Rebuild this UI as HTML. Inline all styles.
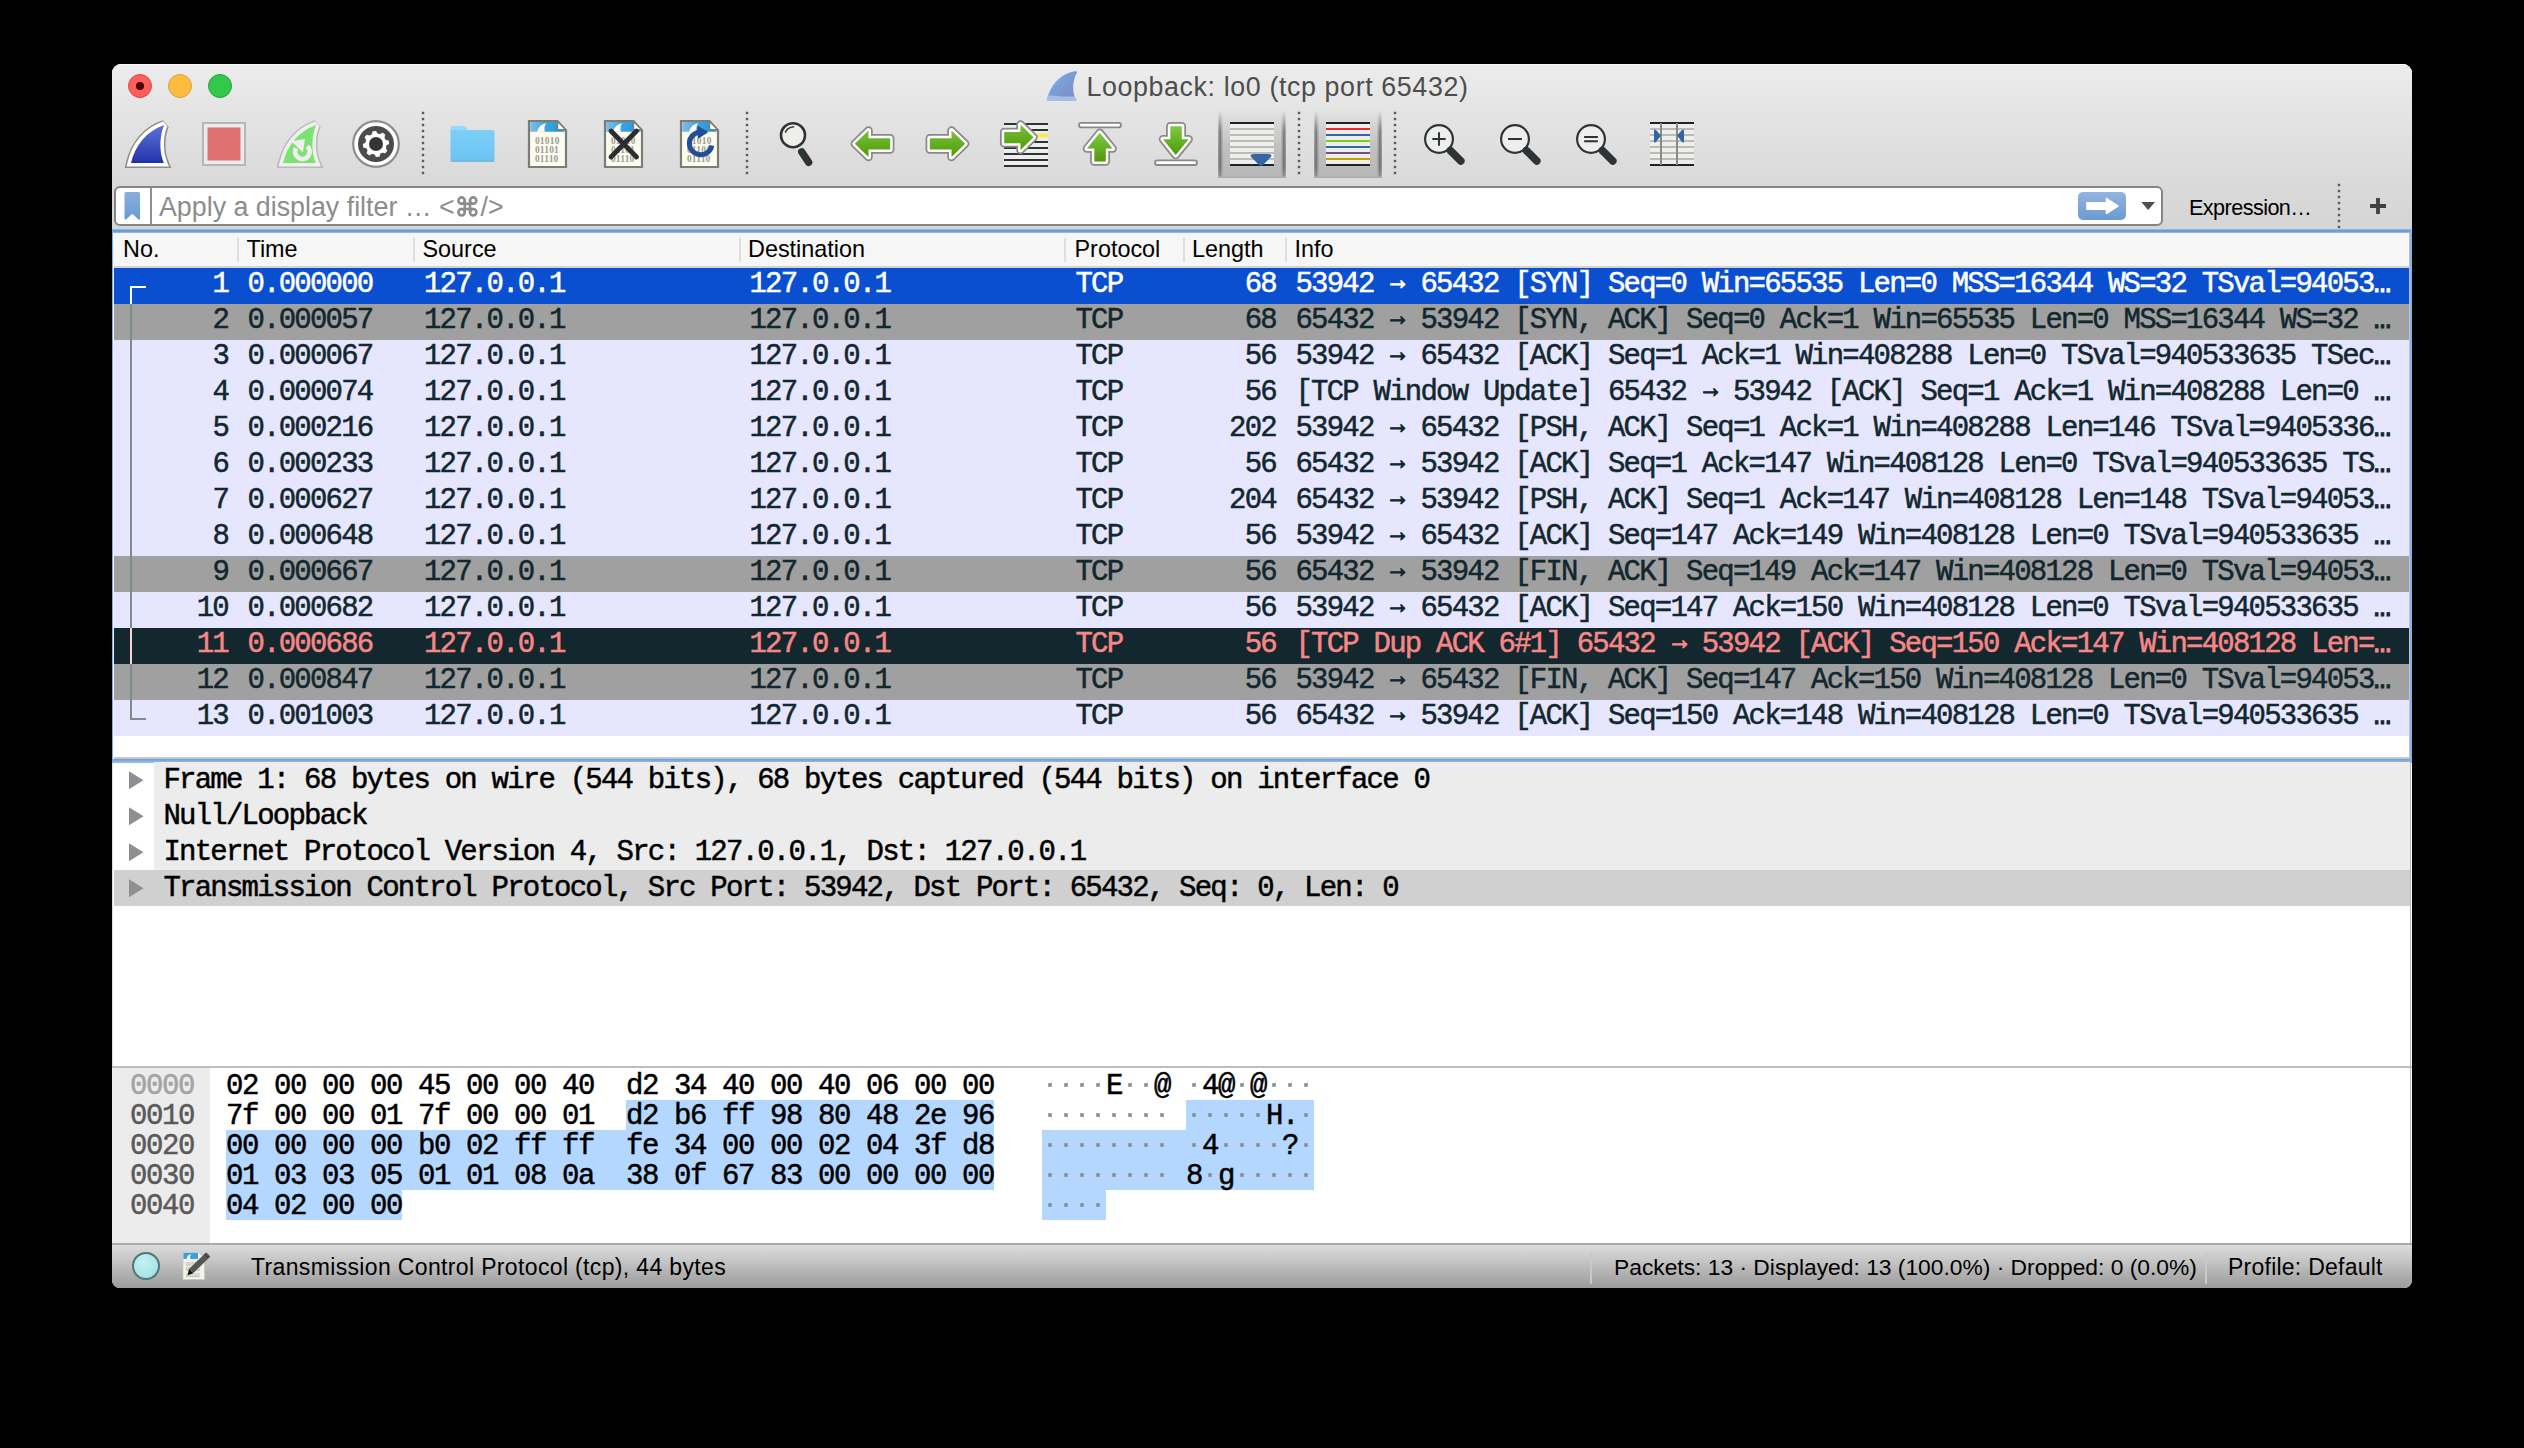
<!DOCTYPE html><html><head><meta charset="utf-8"><title>Wireshark</title><style>
html,body{margin:0;padding:0;background:#000;width:2524px;height:1448px;overflow:hidden}
#win{position:absolute;left:112px;top:64px;width:2300px;height:1224px;background:#fff;border-radius:9px 9px 8px 8px;overflow:hidden}
.a{position:absolute}
.t{position:absolute;white-space:pre;line-height:normal}
.m{font-family:'Liberation Mono',monospace;font-size:29px;letter-spacing:-1.778px;-webkit-text-stroke:0.5px currentColor}
.s{font-family:'Liberation Sans',sans-serif}
.ar{display:inline-block;position:relative;top:-3px;transform:scaleX(0.82);-webkit-text-stroke:1.2px currentColor}
.el{-webkit-text-stroke:1.0px currentColor}
svg.ov{position:absolute;left:-112px;top:-64px;overflow:visible}
</style></head><body>
<div id="win">
<div class="a" style="left:0px;top:0px;width:2300px;height:165px;background:linear-gradient(#ececec 0%,#e4e4e4 30%,#dadada 70%,#d5d5d5 100%)"></div>
<div class="a" style="left:0px;top:0px;width:2300px;height:1px;background:#f8f8f8"></div>
<div class="a" style="left:16px;top:10px;width:22px;height:22px;border-radius:50%;background:#fc605c;border:1px solid #df4744"></div>
<div class="a" style="left:56px;top:10px;width:22px;height:22px;border-radius:50%;background:#fdbc40;border:1px solid #de9f34"></div>
<div class="a" style="left:96px;top:10px;width:22px;height:22px;border-radius:50%;background:#34c84a;border:1px solid #27a23a"></div>
<div class="a" style="left:24px;top:18px;width:8px;height:8px;border-radius:50%;background:#4d0000"></div>
<div class="t s" style="left:974.4px;top:7.55px;font-size:26.8px;color:#4d4d4d;letter-spacing:0.62px">Loopback: lo0 (tcp port 65432)</div>
<div class="a" style="left:1.8px;top:121.5px;width:2045.5px;height:36.2px;background:#fff;border:2px solid #858585;border-radius:6px"></div>
<div class="a" style="left:37.5px;top:124px;width:2px;height:36px;background:#8f8f8f"></div>
<div class="t s" style="left:47px;top:128.25px;font-size:26.8px;color:#8c8c8c;">Apply a display filter … &lt;</div>
<div class="t s" style="left:368.5px;top:128.25px;font-size:26.8px;color:#8c8c8c;">/&gt;</div>
<div class="t s" style="left:-111px;top:-63.91px;font-size:1px;color:#000;"></div>
<div class="a" style="left:0px;top:165px;width:2300px;height:4px;background:linear-gradient(#9cc3f0,#6b9bd3 40%,#6b9bd3 60%,#9cc3f0)"></div>
<div class="a" style="left:2px;top:169px;width:2296px;height:33px;background:#f6f6f6"></div>
<div class="a" style="left:2px;top:202px;width:2296px;height:2px;background:#d5d3d0"></div>
<div class="a" style="left:952px;top:174px;width:2px;height:24px;background:#dedede"></div>
<div class="a" style="left:125px;top:174px;width:2px;height:24px;background:#dedede"></div>
<div class="a" style="left:301px;top:174px;width:2px;height:24px;background:#dedede"></div>
<div class="a" style="left:627px;top:174px;width:2px;height:24px;background:#dedede"></div>
<div class="a" style="left:1071px;top:174px;width:2px;height:24px;background:#dedede"></div>
<div class="a" style="left:1173px;top:174px;width:2px;height:24px;background:#dedede"></div>
<div class="t s" style="left:11px;top:171.82px;font-size:23.4px;color:#000;">No.</div>
<div class="t s" style="left:134.5px;top:171.82px;font-size:23.4px;color:#000;">Time</div>
<div class="t s" style="left:310.5px;top:171.82px;font-size:23.4px;color:#000;">Source</div>
<div class="t s" style="left:636px;top:171.82px;font-size:23.4px;color:#000;">Destination</div>
<div class="t s" style="left:962.5px;top:171.82px;font-size:23.4px;color:#000;">Protocol</div>
<div class="t s" style="left:1080px;top:171.82px;font-size:23.4px;color:#000;">Length</div>
<div class="t s" style="left:1182.5px;top:171.82px;font-size:23.4px;color:#000;">Info</div>
<div class="a" style="left:2px;top:204px;width:2296px;height:36px;background:#0b4fd1"></div>
<div class="t m" style="left:100.375px;top:204.46px;color:#ffffff;">1</div>
<div class="t m" style="left:135.5px;top:204.46px;color:#ffffff;">0.000000</div>
<div class="t m" style="left:312px;top:204.46px;color:#ffffff;">127.0.0.1</div>
<div class="t m" style="left:637.5px;top:204.46px;color:#ffffff;">127.0.0.1</div>
<div class="t m" style="left:963.5px;top:204.46px;color:#ffffff;">TCP</div>
<div class="t m" style="left:1132.75px;top:204.46px;color:#ffffff;">68</div>
<div class="t m" style="left:1183.5px;top:204.46px;color:#ffffff;">53942 <span class="ar">→</span> 65432 [SYN] Seq=0 Win=65535 Len=0 MSS=16344 WS=32 TSval=94053<span class="el">…</span></div>
<div class="a" style="left:2px;top:240px;width:2296px;height:36px;background:#a0a0a0"></div>
<div class="t m" style="left:100.375px;top:240.46px;color:#12272e;">2</div>
<div class="t m" style="left:135.5px;top:240.46px;color:#12272e;">0.000057</div>
<div class="t m" style="left:312px;top:240.46px;color:#12272e;">127.0.0.1</div>
<div class="t m" style="left:637.5px;top:240.46px;color:#12272e;">127.0.0.1</div>
<div class="t m" style="left:963.5px;top:240.46px;color:#12272e;">TCP</div>
<div class="t m" style="left:1132.75px;top:240.46px;color:#12272e;">68</div>
<div class="t m" style="left:1183.5px;top:240.46px;color:#12272e;">65432 <span class="ar">→</span> 53942 [SYN, ACK] Seq=0 Ack=1 Win=65535 Len=0 MSS=16344 WS=32 <span class="el">…</span></div>
<div class="a" style="left:2px;top:276px;width:2296px;height:36px;background:#e7e6ff"></div>
<div class="t m" style="left:100.375px;top:276.46px;color:#12272e;">3</div>
<div class="t m" style="left:135.5px;top:276.46px;color:#12272e;">0.000067</div>
<div class="t m" style="left:312px;top:276.46px;color:#12272e;">127.0.0.1</div>
<div class="t m" style="left:637.5px;top:276.46px;color:#12272e;">127.0.0.1</div>
<div class="t m" style="left:963.5px;top:276.46px;color:#12272e;">TCP</div>
<div class="t m" style="left:1132.75px;top:276.46px;color:#12272e;">56</div>
<div class="t m" style="left:1183.5px;top:276.46px;color:#12272e;">53942 <span class="ar">→</span> 65432 [ACK] Seq=1 Ack=1 Win=408288 Len=0 TSval=940533635 TSec<span class="el">…</span></div>
<div class="a" style="left:2px;top:312px;width:2296px;height:36px;background:#e7e6ff"></div>
<div class="t m" style="left:100.375px;top:312.46px;color:#12272e;">4</div>
<div class="t m" style="left:135.5px;top:312.46px;color:#12272e;">0.000074</div>
<div class="t m" style="left:312px;top:312.46px;color:#12272e;">127.0.0.1</div>
<div class="t m" style="left:637.5px;top:312.46px;color:#12272e;">127.0.0.1</div>
<div class="t m" style="left:963.5px;top:312.46px;color:#12272e;">TCP</div>
<div class="t m" style="left:1132.75px;top:312.46px;color:#12272e;">56</div>
<div class="t m" style="left:1183.5px;top:312.46px;color:#12272e;">[TCP Window Update] 65432 <span class="ar">→</span> 53942 [ACK] Seq=1 Ack=1 Win=408288 Len=0 <span class="el">…</span></div>
<div class="a" style="left:2px;top:348px;width:2296px;height:36px;background:#e7e6ff"></div>
<div class="t m" style="left:100.375px;top:348.46px;color:#12272e;">5</div>
<div class="t m" style="left:135.5px;top:348.46px;color:#12272e;">0.000216</div>
<div class="t m" style="left:312px;top:348.46px;color:#12272e;">127.0.0.1</div>
<div class="t m" style="left:637.5px;top:348.46px;color:#12272e;">127.0.0.1</div>
<div class="t m" style="left:963.5px;top:348.46px;color:#12272e;">TCP</div>
<div class="t m" style="left:1117.12px;top:348.46px;color:#12272e;">202</div>
<div class="t m" style="left:1183.5px;top:348.46px;color:#12272e;">53942 <span class="ar">→</span> 65432 [PSH, ACK] Seq=1 Ack=1 Win=408288 Len=146 TSval=9405336<span class="el">…</span></div>
<div class="a" style="left:2px;top:384px;width:2296px;height:36px;background:#e7e6ff"></div>
<div class="t m" style="left:100.375px;top:384.46px;color:#12272e;">6</div>
<div class="t m" style="left:135.5px;top:384.46px;color:#12272e;">0.000233</div>
<div class="t m" style="left:312px;top:384.46px;color:#12272e;">127.0.0.1</div>
<div class="t m" style="left:637.5px;top:384.46px;color:#12272e;">127.0.0.1</div>
<div class="t m" style="left:963.5px;top:384.46px;color:#12272e;">TCP</div>
<div class="t m" style="left:1132.75px;top:384.46px;color:#12272e;">56</div>
<div class="t m" style="left:1183.5px;top:384.46px;color:#12272e;">65432 <span class="ar">→</span> 53942 [ACK] Seq=1 Ack=147 Win=408128 Len=0 TSval=940533635 TS<span class="el">…</span></div>
<div class="a" style="left:2px;top:420px;width:2296px;height:36px;background:#e7e6ff"></div>
<div class="t m" style="left:100.375px;top:420.46px;color:#12272e;">7</div>
<div class="t m" style="left:135.5px;top:420.46px;color:#12272e;">0.000627</div>
<div class="t m" style="left:312px;top:420.46px;color:#12272e;">127.0.0.1</div>
<div class="t m" style="left:637.5px;top:420.46px;color:#12272e;">127.0.0.1</div>
<div class="t m" style="left:963.5px;top:420.46px;color:#12272e;">TCP</div>
<div class="t m" style="left:1117.12px;top:420.46px;color:#12272e;">204</div>
<div class="t m" style="left:1183.5px;top:420.46px;color:#12272e;">65432 <span class="ar">→</span> 53942 [PSH, ACK] Seq=1 Ack=147 Win=408128 Len=148 TSval=94053<span class="el">…</span></div>
<div class="a" style="left:2px;top:456px;width:2296px;height:36px;background:#e7e6ff"></div>
<div class="t m" style="left:100.375px;top:456.46px;color:#12272e;">8</div>
<div class="t m" style="left:135.5px;top:456.46px;color:#12272e;">0.000648</div>
<div class="t m" style="left:312px;top:456.46px;color:#12272e;">127.0.0.1</div>
<div class="t m" style="left:637.5px;top:456.46px;color:#12272e;">127.0.0.1</div>
<div class="t m" style="left:963.5px;top:456.46px;color:#12272e;">TCP</div>
<div class="t m" style="left:1132.75px;top:456.46px;color:#12272e;">56</div>
<div class="t m" style="left:1183.5px;top:456.46px;color:#12272e;">53942 <span class="ar">→</span> 65432 [ACK] Seq=147 Ack=149 Win=408128 Len=0 TSval=940533635 <span class="el">…</span></div>
<div class="a" style="left:2px;top:492px;width:2296px;height:36px;background:#a0a0a0"></div>
<div class="t m" style="left:100.375px;top:492.46px;color:#12272e;">9</div>
<div class="t m" style="left:135.5px;top:492.46px;color:#12272e;">0.000667</div>
<div class="t m" style="left:312px;top:492.46px;color:#12272e;">127.0.0.1</div>
<div class="t m" style="left:637.5px;top:492.46px;color:#12272e;">127.0.0.1</div>
<div class="t m" style="left:963.5px;top:492.46px;color:#12272e;">TCP</div>
<div class="t m" style="left:1132.75px;top:492.46px;color:#12272e;">56</div>
<div class="t m" style="left:1183.5px;top:492.46px;color:#12272e;">65432 <span class="ar">→</span> 53942 [FIN, ACK] Seq=149 Ack=147 Win=408128 Len=0 TSval=94053<span class="el">…</span></div>
<div class="a" style="left:2px;top:528px;width:2296px;height:36px;background:#e7e6ff"></div>
<div class="t m" style="left:84.75px;top:528.46px;color:#12272e;">10</div>
<div class="t m" style="left:135.5px;top:528.46px;color:#12272e;">0.000682</div>
<div class="t m" style="left:312px;top:528.46px;color:#12272e;">127.0.0.1</div>
<div class="t m" style="left:637.5px;top:528.46px;color:#12272e;">127.0.0.1</div>
<div class="t m" style="left:963.5px;top:528.46px;color:#12272e;">TCP</div>
<div class="t m" style="left:1132.75px;top:528.46px;color:#12272e;">56</div>
<div class="t m" style="left:1183.5px;top:528.46px;color:#12272e;">53942 <span class="ar">→</span> 65432 [ACK] Seq=147 Ack=150 Win=408128 Len=0 TSval=940533635 <span class="el">…</span></div>
<div class="a" style="left:2px;top:564px;width:2296px;height:36px;background:#12272e"></div>
<div class="t m" style="left:84.75px;top:564.46px;color:#f78787;">11</div>
<div class="t m" style="left:135.5px;top:564.46px;color:#f78787;">0.000686</div>
<div class="t m" style="left:312px;top:564.46px;color:#f78787;">127.0.0.1</div>
<div class="t m" style="left:637.5px;top:564.46px;color:#f78787;">127.0.0.1</div>
<div class="t m" style="left:963.5px;top:564.46px;color:#f78787;">TCP</div>
<div class="t m" style="left:1132.75px;top:564.46px;color:#f78787;">56</div>
<div class="t m" style="left:1183.5px;top:564.46px;color:#f78787;">[TCP Dup ACK 6#1] 65432 <span class="ar">→</span> 53942 [ACK] Seq=150 Ack=147 Win=408128 Len=<span class="el">…</span></div>
<div class="a" style="left:2px;top:600px;width:2296px;height:36px;background:#a0a0a0"></div>
<div class="t m" style="left:84.75px;top:600.46px;color:#12272e;">12</div>
<div class="t m" style="left:135.5px;top:600.46px;color:#12272e;">0.000847</div>
<div class="t m" style="left:312px;top:600.46px;color:#12272e;">127.0.0.1</div>
<div class="t m" style="left:637.5px;top:600.46px;color:#12272e;">127.0.0.1</div>
<div class="t m" style="left:963.5px;top:600.46px;color:#12272e;">TCP</div>
<div class="t m" style="left:1132.75px;top:600.46px;color:#12272e;">56</div>
<div class="t m" style="left:1183.5px;top:600.46px;color:#12272e;">53942 <span class="ar">→</span> 65432 [FIN, ACK] Seq=147 Ack=150 Win=408128 Len=0 TSval=94053<span class="el">…</span></div>
<div class="a" style="left:2px;top:636px;width:2296px;height:36px;background:#e7e6ff"></div>
<div class="t m" style="left:84.75px;top:636.46px;color:#12272e;">13</div>
<div class="t m" style="left:135.5px;top:636.46px;color:#12272e;">0.001003</div>
<div class="t m" style="left:312px;top:636.46px;color:#12272e;">127.0.0.1</div>
<div class="t m" style="left:637.5px;top:636.46px;color:#12272e;">127.0.0.1</div>
<div class="t m" style="left:963.5px;top:636.46px;color:#12272e;">TCP</div>
<div class="t m" style="left:1132.75px;top:636.46px;color:#12272e;">56</div>
<div class="t m" style="left:1183.5px;top:636.46px;color:#12272e;">65432 <span class="ar">→</span> 53942 [ACK] Seq=150 Ack=148 Win=408128 Len=0 TSval=940533635 <span class="el">…</span></div>
<div class="a" style="left:18px;top:222px;width:2px;height:434px;background:#7f8c8d"></div>
<div class="a" style="left:18px;top:222px;width:16px;height:2px;background:#ffffff"></div>
<div class="a" style="left:18px;top:222px;width:2px;height:18px;background:#ffffff"></div>
<div class="a" style="left:18px;top:654px;width:16px;height:2px;background:#7f8c8d"></div>
<div class="a" style="left:18px;top:564px;width:2px;height:36px;background:#fdd3d3"></div>
<div class="a" style="left:0px;top:693px;width:2300px;height:2px;background:#c8c8c8"></div>
<div class="a" style="left:0px;top:695px;width:2300px;height:4px;background:linear-gradient(#6b9bd3,#9cc3f0)"></div>
<div class="a" style="left:0px;top:165px;width:1.3px;height:534px;background:#7ea9e0"></div>
<div class="a" style="left:1.3px;top:169px;width:0.7px;height:526px;background:#f4f8fc"></div>
<div class="a" style="left:2297px;top:169px;width:1px;height:526px;background:#c0c0c0"></div>
<div class="a" style="left:2298px;top:165px;width:2px;height:534px;background:#84b2ea"></div>
<div class="a" style="left:42px;top:698px;width:2256px;height:108px;background:#ececec"></div>
<div class="a" style="left:2px;top:806px;width:2296px;height:36px;background:#d0d0d0"></div>
<div class="t m" style="left:51.5px;top:699.86px;color:#000;">Frame 1: 68 bytes on wire (544 bits), 68 bytes captured (544 bits) on interface 0</div>
<svg class="ov" width="2524" height="1448" viewBox="0 0 2524 1448"><path d="M129 771.2 L143.5 780.2 L129 789.2 Z" fill="#8f8f8f"/></svg>
<div class="t m" style="left:51.5px;top:735.86px;color:#000;">Null/Loopback</div>
<svg class="ov" width="2524" height="1448" viewBox="0 0 2524 1448"><path d="M129 807.2 L143.5 816.2 L129 825.2 Z" fill="#8f8f8f"/></svg>
<div class="t m" style="left:51.5px;top:771.86px;color:#000;">Internet Protocol Version 4, Src: 127.0.0.1, Dst: 127.0.0.1</div>
<svg class="ov" width="2524" height="1448" viewBox="0 0 2524 1448"><path d="M129 843.2 L143.5 852.2 L129 861.2 Z" fill="#8f8f8f"/></svg>
<div class="t m" style="left:51.5px;top:807.86px;color:#000;">Transmission Control Protocol, Src Port: 53942, Dst Port: 65432, Seq: 0, Len: 0</div>
<svg class="ov" width="2524" height="1448" viewBox="0 0 2524 1448"><path d="M129 879.2 L143.5 888.2 L129 897.2 Z" fill="#8f8f8f"/></svg>
<div class="a" style="left:2297.5px;top:699px;width:1px;height:480px;background:#b8b8b8"></div>
<div class="a" style="left:0px;top:699px;width:1px;height:480px;background:#dcdcdc"></div>
<div class="a" style="left:0px;top:1002px;width:2300px;height:2px;background:#bdbdbd"></div>
<div class="a" style="left:0px;top:1004px;width:98px;height:175px;background:#ececec"></div>
<div class="a" style="left:514px;top:1036px;width:368px;height:30px;background:#b3d7ff"></div>
<div class="a" style="left:114px;top:1066px;width:768px;height:60px;background:#b3d7ff"></div>
<div class="a" style="left:114px;top:1126px;width:176px;height:30px;background:#b3d7ff"></div>
<div class="a" style="left:1074px;top:1036px;width:128px;height:30px;background:#b3d7ff"></div>
<div class="a" style="left:930px;top:1066px;width:272px;height:60px;background:#b3d7ff"></div>
<div class="a" style="left:930px;top:1126px;width:64px;height:30px;background:#b3d7ff"></div>
<div class="t m" style="left:18px;top:1005.86px;color:#a3a3a3;letter-spacing:-1.403px">0000</div>
<div class="t m" style="left:114px;top:1005.86px;color:#000;letter-spacing:-1.403px">02 00 00 00 45 00 00 40</div>
<div class="t m" style="left:514px;top:1005.86px;color:#000;letter-spacing:-1.403px">d2 34 40 00 40 06 00 00</div>
<div class="t m" style="left:18px;top:1035.86px;color:#5a5a5a;letter-spacing:-1.403px">0010</div>
<div class="t m" style="left:114px;top:1035.86px;color:#000;letter-spacing:-1.403px">7f 00 00 01 7f 00 00 01</div>
<div class="t m" style="left:514px;top:1035.86px;color:#000;letter-spacing:-1.403px">d2 b6 ff 98 80 48 2e 96</div>
<div class="t m" style="left:18px;top:1065.86px;color:#5a5a5a;letter-spacing:-1.403px">0020</div>
<div class="t m" style="left:114px;top:1065.86px;color:#000;letter-spacing:-1.403px">00 00 00 00 b0 02 ff ff</div>
<div class="t m" style="left:514px;top:1065.86px;color:#000;letter-spacing:-1.403px">fe 34 00 00 02 04 3f d8</div>
<div class="t m" style="left:18px;top:1095.86px;color:#5a5a5a;letter-spacing:-1.403px">0030</div>
<div class="t m" style="left:114px;top:1095.86px;color:#000;letter-spacing:-1.403px">01 03 03 05 01 01 08 0a</div>
<div class="t m" style="left:514px;top:1095.86px;color:#000;letter-spacing:-1.403px">38 0f 67 83 00 00 00 00</div>
<div class="t m" style="left:18px;top:1125.86px;color:#5a5a5a;letter-spacing:-1.403px">0040</div>
<div class="t m" style="left:114px;top:1125.86px;color:#000;letter-spacing:-1.403px">04 02 00 00</div>
<svg class="ov" width="2524" height="1448" viewBox="0 0 2524 1448">
<rect x="1048.2" y="1083.2" width="3.6" height="3.6" fill="#8c8c8c"/>
<rect x="1064.2" y="1083.2" width="3.6" height="3.6" fill="#8c8c8c"/>
<rect x="1080.2" y="1083.2" width="3.6" height="3.6" fill="#8c8c8c"/>
<rect x="1096.2" y="1083.2" width="3.6" height="3.6" fill="#8c8c8c"/>
<rect x="1128.2" y="1083.2" width="3.6" height="3.6" fill="#8c8c8c"/>
<rect x="1144.2" y="1083.2" width="3.6" height="3.6" fill="#8c8c8c"/>
<rect x="1192.2" y="1083.2" width="3.6" height="3.6" fill="#8c8c8c"/>
<rect x="1240.2" y="1083.2" width="3.6" height="3.6" fill="#8c8c8c"/>
<rect x="1272.2" y="1083.2" width="3.6" height="3.6" fill="#8c8c8c"/>
<rect x="1288.2" y="1083.2" width="3.6" height="3.6" fill="#8c8c8c"/>
<rect x="1304.2" y="1083.2" width="3.6" height="3.6" fill="#8c8c8c"/>
<rect x="1048.2" y="1113.2" width="3.6" height="3.6" fill="#8c8c8c"/>
<rect x="1064.2" y="1113.2" width="3.6" height="3.6" fill="#8c8c8c"/>
<rect x="1080.2" y="1113.2" width="3.6" height="3.6" fill="#8c8c8c"/>
<rect x="1096.2" y="1113.2" width="3.6" height="3.6" fill="#8c8c8c"/>
<rect x="1112.2" y="1113.2" width="3.6" height="3.6" fill="#8c8c8c"/>
<rect x="1128.2" y="1113.2" width="3.6" height="3.6" fill="#8c8c8c"/>
<rect x="1144.2" y="1113.2" width="3.6" height="3.6" fill="#8c8c8c"/>
<rect x="1160.2" y="1113.2" width="3.6" height="3.6" fill="#8c8c8c"/>
<rect x="1192.2" y="1113.2" width="3.6" height="3.6" fill="#8c8c8c"/>
<rect x="1208.2" y="1113.2" width="3.6" height="3.6" fill="#8c8c8c"/>
<rect x="1224.2" y="1113.2" width="3.6" height="3.6" fill="#8c8c8c"/>
<rect x="1240.2" y="1113.2" width="3.6" height="3.6" fill="#8c8c8c"/>
<rect x="1256.2" y="1113.2" width="3.6" height="3.6" fill="#8c8c8c"/>
<rect x="1304.2" y="1113.2" width="3.6" height="3.6" fill="#8c8c8c"/>
<rect x="1048.2" y="1143.2" width="3.6" height="3.6" fill="#8c8c8c"/>
<rect x="1064.2" y="1143.2" width="3.6" height="3.6" fill="#8c8c8c"/>
<rect x="1080.2" y="1143.2" width="3.6" height="3.6" fill="#8c8c8c"/>
<rect x="1096.2" y="1143.2" width="3.6" height="3.6" fill="#8c8c8c"/>
<rect x="1112.2" y="1143.2" width="3.6" height="3.6" fill="#8c8c8c"/>
<rect x="1128.2" y="1143.2" width="3.6" height="3.6" fill="#8c8c8c"/>
<rect x="1144.2" y="1143.2" width="3.6" height="3.6" fill="#8c8c8c"/>
<rect x="1160.2" y="1143.2" width="3.6" height="3.6" fill="#8c8c8c"/>
<rect x="1192.2" y="1143.2" width="3.6" height="3.6" fill="#8c8c8c"/>
<rect x="1224.2" y="1143.2" width="3.6" height="3.6" fill="#8c8c8c"/>
<rect x="1240.2" y="1143.2" width="3.6" height="3.6" fill="#8c8c8c"/>
<rect x="1256.2" y="1143.2" width="3.6" height="3.6" fill="#8c8c8c"/>
<rect x="1272.2" y="1143.2" width="3.6" height="3.6" fill="#8c8c8c"/>
<rect x="1304.2" y="1143.2" width="3.6" height="3.6" fill="#8c8c8c"/>
<rect x="1048.2" y="1173.2" width="3.6" height="3.6" fill="#8c8c8c"/>
<rect x="1064.2" y="1173.2" width="3.6" height="3.6" fill="#8c8c8c"/>
<rect x="1080.2" y="1173.2" width="3.6" height="3.6" fill="#8c8c8c"/>
<rect x="1096.2" y="1173.2" width="3.6" height="3.6" fill="#8c8c8c"/>
<rect x="1112.2" y="1173.2" width="3.6" height="3.6" fill="#8c8c8c"/>
<rect x="1128.2" y="1173.2" width="3.6" height="3.6" fill="#8c8c8c"/>
<rect x="1144.2" y="1173.2" width="3.6" height="3.6" fill="#8c8c8c"/>
<rect x="1160.2" y="1173.2" width="3.6" height="3.6" fill="#8c8c8c"/>
<rect x="1208.2" y="1173.2" width="3.6" height="3.6" fill="#8c8c8c"/>
<rect x="1240.2" y="1173.2" width="3.6" height="3.6" fill="#8c8c8c"/>
<rect x="1256.2" y="1173.2" width="3.6" height="3.6" fill="#8c8c8c"/>
<rect x="1272.2" y="1173.2" width="3.6" height="3.6" fill="#8c8c8c"/>
<rect x="1288.2" y="1173.2" width="3.6" height="3.6" fill="#8c8c8c"/>
<rect x="1304.2" y="1173.2" width="3.6" height="3.6" fill="#8c8c8c"/>
<rect x="1048.2" y="1203.2" width="3.6" height="3.6" fill="#8c8c8c"/>
<rect x="1064.2" y="1203.2" width="3.6" height="3.6" fill="#8c8c8c"/>
<rect x="1080.2" y="1203.2" width="3.6" height="3.6" fill="#8c8c8c"/>
<rect x="1096.2" y="1203.2" width="3.6" height="3.6" fill="#8c8c8c"/>
</svg>
<div class="t m" style="left:930px;top:1005.86px;color:#000;letter-spacing:-1.403px">    E  @  4@ @   </div>
<div class="t m" style="left:930px;top:1035.86px;color:#000;letter-spacing:-1.403px">              H. </div>
<div class="t m" style="left:930px;top:1065.86px;color:#000;letter-spacing:-1.403px">          4    ? </div>
<div class="t m" style="left:930px;top:1095.86px;color:#000;letter-spacing:-1.403px">         8 g     </div>
<div class="t m" style="left:930px;top:1125.86px;color:#000;letter-spacing:-1.403px">     </div>
<div class="a" style="left:0px;top:1179px;width:2300px;height:2px;background:#a9a9a9"></div>
<div class="a" style="left:0px;top:1181px;width:2300px;height:43px;background:linear-gradient(#dcdcdc,#c6c6c6 35%,#b2b2b2 65%,#9b9b9b)"></div>
<div class="a" style="left:20px;top:1188px;width:24px;height:24px;border-radius:50%;background:radial-gradient(circle at 40% 35%,#c8f0f0,#96e0e2);border:2.4px solid #507676"></div>
<div class="t s" style="left:139px;top:1190.18px;font-size:23px;color:#000;letter-spacing:0.35px">Transmission Control Protocol (tcp), 44 bytes</div>
<div class="a" style="left:1478px;top:1188px;width:2px;height:32px;background:#c9c9c9"></div>
<div class="a" style="left:2093px;top:1188px;width:2px;height:32px;background:#c9c9c9"></div>
<div class="t s" style="left:1502px;top:1190.37px;font-size:22.8px;color:#000;">Packets: 13 · Displayed: 13 (100.0%) · Dropped: 0 (0.0%)</div>
<div class="t s" style="left:2116px;top:1190.18px;font-size:23px;color:#000;letter-spacing:0.24px">Profile: Default</div>
<svg class="ov" width="2524" height="1448" viewBox="0 0 2524 1448">
<defs>
<linearGradient id="gBlue" x1="0" y1="0" x2="0" y2="1"><stop offset="0" stop-color="#5d72da"/><stop offset="1" stop-color="#2233aa"/></linearGradient>
<linearGradient id="gGreen" x1="0" y1="0" x2="0" y2="1"><stop offset="0" stop-color="#7bc03e"/><stop offset="1" stop-color="#4e9a06"/></linearGradient>
<linearGradient id="gGreenV" x1="0" y1="0" x2="0" y2="1"><stop offset="0" stop-color="#80c947"/><stop offset="1" stop-color="#4e9a06"/></linearGradient>
<linearGradient id="docband" x1="0" y1="0" x2="1" y2="0"><stop offset="0" stop-color="#84bde2"/><stop offset="0.5" stop-color="#3aa2dd"/><stop offset="1" stop-color="#1e94d8"/></linearGradient>
<linearGradient id="folder" x1="0" y1="0" x2="0" y2="1"><stop offset="0" stop-color="#7fd0f8"/><stop offset="1" stop-color="#6cc3f2"/></linearGradient>
<linearGradient id="pressed" x1="0" y1="0" x2="0" y2="1"><stop offset="0" stop-color="#e3e3e3"/><stop offset="0.3" stop-color="#cfcfcf"/><stop offset="0.55" stop-color="#c0c0c0"/><stop offset="1" stop-color="#b7b7b7"/></linearGradient>
<linearGradient id="pressedE" x1="0" y1="0" x2="0" y2="1"><stop offset="0" stop-color="#000" stop-opacity="0"/><stop offset="0.3" stop-color="#000" stop-opacity="0.2"/><stop offset="0.85" stop-color="#000" stop-opacity="0.2"/><stop offset="1" stop-color="#000" stop-opacity="0.08"/></linearGradient>
<linearGradient id="pressedEH" x1="0" y1="0" x2="1" y2="0"><stop offset="0" stop-color="#fff" stop-opacity="1"/><stop offset="1" stop-color="#fff" stop-opacity="0"/></linearGradient>
<linearGradient id="applyBtn" x1="0" y1="0" x2="0" y2="1"><stop offset="0" stop-color="#93b4de"/><stop offset="1" stop-color="#6c9ad2"/></linearGradient>
<linearGradient id="bmark" x1="0" y1="0" x2="0" y2="1"><stop offset="0" stop-color="#8aaedb"/><stop offset="1" stop-color="#6b9bd3"/></linearGradient>
</defs><path d="M131 163 C135 146 146 131 164.2 124.9 C160 134 158.5 150 163.8 163 Z" fill="none" stroke="#8c8c8c" stroke-width="10" stroke-linejoin="miter" stroke-miterlimit="2.2"/><path d="M131 163 C135 146 146 131 164.2 124.9 C160 134 158.5 150 163.8 163 Z" fill="none" stroke="#ffffff" stroke-width="7" stroke-linejoin="miter" stroke-miterlimit="2.2"/><path d="M131 163 C135 146 146 131 164.2 124.9 C160 134 158.5 150 163.8 163 Z" fill="url(#gBlue)"/><rect x="203" y="123" width="42" height="42" fill="#ebebeb" stroke="#b6b6b6" stroke-width="2"/><rect x="207.5" y="127.5" width="33" height="33" fill="#e07171"/><path d="M283 163 C287 146 298 131 316.2 124.9 C312 134 310.5 150 315.8 163 Z" fill="none" stroke="#b9b9b9" stroke-width="10" stroke-linejoin="miter" stroke-miterlimit="2.2"/><path d="M283 163 C287 146 298 131 316.2 124.9 C312 134 310.5 150 315.8 163 Z" fill="none" stroke="#efefef" stroke-width="7" stroke-linejoin="miter" stroke-miterlimit="2.2"/><path d="M283 163 C287 146 298 131 316.2 124.9 C312 134 310.5 150 315.8 163 Z" fill="#7ee174"/><path d="M307.25 146.3 A7.25 7.25 0 1 1 296.06 148.2" fill="none" stroke="#efefef" stroke-width="4.8"/><path d="M291.3 141.2 L305 139 L302.9 152.4 Z" fill="#efefef"/><circle cx="376" cy="144" r="22.8" fill="#ffffff" stroke="#8e8e8e" stroke-width="2.2"/><circle cx="376" cy="144" r="18" fill="#4b4b4b"/><circle cx="376" cy="144" r="13.1" fill="#ffffff"/><circle cx="379.45" cy="130.85" r="3.1" fill="#4b4b4b"/><circle cx="387.74" cy="137.14" r="3.1" fill="#4b4b4b"/><circle cx="389.15" cy="147.45" r="3.1" fill="#4b4b4b"/><circle cx="382.86" cy="155.74" r="3.1" fill="#4b4b4b"/><circle cx="372.55" cy="157.15" r="3.1" fill="#4b4b4b"/><circle cx="364.26" cy="150.86" r="3.1" fill="#4b4b4b"/><circle cx="362.85" cy="140.55" r="3.1" fill="#4b4b4b"/><circle cx="369.14" cy="132.26" r="3.1" fill="#4b4b4b"/><circle cx="376" cy="144" r="7" fill="#353535"/><rect x="421.8" y="111.8" width="2.4" height="2.4" fill="#5c5c5c"/><rect x="421.8" y="117.8" width="2.4" height="2.4" fill="#5c5c5c"/><rect x="421.8" y="123.8" width="2.4" height="2.4" fill="#5c5c5c"/><rect x="421.8" y="129.8" width="2.4" height="2.4" fill="#5c5c5c"/><rect x="421.8" y="135.8" width="2.4" height="2.4" fill="#5c5c5c"/><rect x="421.8" y="141.8" width="2.4" height="2.4" fill="#5c5c5c"/><rect x="421.8" y="147.8" width="2.4" height="2.4" fill="#5c5c5c"/><rect x="421.8" y="153.8" width="2.4" height="2.4" fill="#5c5c5c"/><rect x="421.8" y="159.8" width="2.4" height="2.4" fill="#5c5c5c"/><rect x="421.8" y="165.8" width="2.4" height="2.4" fill="#5c5c5c"/><rect x="421.8" y="171.8" width="2.4" height="2.4" fill="#5c5c5c"/><rect x="745.8" y="111.8" width="2.4" height="2.4" fill="#5c5c5c"/><rect x="745.8" y="117.8" width="2.4" height="2.4" fill="#5c5c5c"/><rect x="745.8" y="123.8" width="2.4" height="2.4" fill="#5c5c5c"/><rect x="745.8" y="129.8" width="2.4" height="2.4" fill="#5c5c5c"/><rect x="745.8" y="135.8" width="2.4" height="2.4" fill="#5c5c5c"/><rect x="745.8" y="141.8" width="2.4" height="2.4" fill="#5c5c5c"/><rect x="745.8" y="147.8" width="2.4" height="2.4" fill="#5c5c5c"/><rect x="745.8" y="153.8" width="2.4" height="2.4" fill="#5c5c5c"/><rect x="745.8" y="159.8" width="2.4" height="2.4" fill="#5c5c5c"/><rect x="745.8" y="165.8" width="2.4" height="2.4" fill="#5c5c5c"/><rect x="745.8" y="171.8" width="2.4" height="2.4" fill="#5c5c5c"/><rect x="1297.8" y="111.8" width="2.4" height="2.4" fill="#5c5c5c"/><rect x="1297.8" y="117.8" width="2.4" height="2.4" fill="#5c5c5c"/><rect x="1297.8" y="123.8" width="2.4" height="2.4" fill="#5c5c5c"/><rect x="1297.8" y="129.8" width="2.4" height="2.4" fill="#5c5c5c"/><rect x="1297.8" y="135.8" width="2.4" height="2.4" fill="#5c5c5c"/><rect x="1297.8" y="141.8" width="2.4" height="2.4" fill="#5c5c5c"/><rect x="1297.8" y="147.8" width="2.4" height="2.4" fill="#5c5c5c"/><rect x="1297.8" y="153.8" width="2.4" height="2.4" fill="#5c5c5c"/><rect x="1297.8" y="159.8" width="2.4" height="2.4" fill="#5c5c5c"/><rect x="1297.8" y="165.8" width="2.4" height="2.4" fill="#5c5c5c"/><rect x="1297.8" y="171.8" width="2.4" height="2.4" fill="#5c5c5c"/><rect x="1393.8" y="111.8" width="2.4" height="2.4" fill="#5c5c5c"/><rect x="1393.8" y="117.8" width="2.4" height="2.4" fill="#5c5c5c"/><rect x="1393.8" y="123.8" width="2.4" height="2.4" fill="#5c5c5c"/><rect x="1393.8" y="129.8" width="2.4" height="2.4" fill="#5c5c5c"/><rect x="1393.8" y="135.8" width="2.4" height="2.4" fill="#5c5c5c"/><rect x="1393.8" y="141.8" width="2.4" height="2.4" fill="#5c5c5c"/><rect x="1393.8" y="147.8" width="2.4" height="2.4" fill="#5c5c5c"/><rect x="1393.8" y="153.8" width="2.4" height="2.4" fill="#5c5c5c"/><rect x="1393.8" y="159.8" width="2.4" height="2.4" fill="#5c5c5c"/><rect x="1393.8" y="165.8" width="2.4" height="2.4" fill="#5c5c5c"/><rect x="1393.8" y="171.8" width="2.4" height="2.4" fill="#5c5c5c"/><path d="M450.5 131 Q450.5 126 453 126 L463 126 Q465 126 466.5 128.5 L467.5 130 L492.5 130 Q494.5 130 494.5 132 L494.5 159.5 Q494.5 161.5 492.5 161.5 L452.5 161.5 Q450.5 161.5 450.5 159.5 Z" fill="url(#folder)"/><path d="M450.5 131 Q450.5 126 453 126 L463 126 Q465 126 466.5 128.5 L467.5 130 L450.5 130 Z" fill="#95dafb"/><rect x="450.5" y="160.5" width="44" height="1.5" fill="#5aaedb" opacity="0.6"/><path d="M529 121 L557.5 121 L566 130.5 L566 167 L529 167 Z" fill="#fbfbef" stroke="#7c7c76" stroke-width="2.2" stroke-linejoin="miter"/><path d="M530.1 122.1 L557.5 122.1 L564.9 131.8 L530.1 131.8 Z" fill="url(#docband)"/><path d="M557.5 121.5 L565.5 129.6 L557.5 129.6 Z" fill="#fdfdf3" stroke="#7c7c76" stroke-width="1.4" stroke-linejoin="miter"/><path d="M537 131.8 C538.5 127 541.5 124 546.1 123.2 C544.3 125.5 544 129 544.8 131.8 Z" fill="#ffffff"/><g opacity="0.99"><text x="534.9" y="143.9" font-family="Liberation Serif" font-weight="bold" font-size="9.4" fill="#9d9d96" letter-spacing="0.25">01010</text><text x="534.9" y="152.7" font-family="Liberation Serif" font-weight="bold" font-size="9.4" fill="#9d9d96" letter-spacing="0.25">01101</text><text x="534.9" y="161.5" font-family="Liberation Serif" font-weight="bold" font-size="9.4" fill="#9d9d96" letter-spacing="0.25">01110</text></g><path d="M605 121 L633.5 121 L642 130.5 L642 167 L605 167 Z" fill="#fbfbef" stroke="#7c7c76" stroke-width="2.2" stroke-linejoin="miter"/><path d="M606.1 122.1 L633.5 122.1 L640.9 131.8 L606.1 131.8 Z" fill="url(#docband)"/><path d="M633.5 121.5 L641.5 129.6 L633.5 129.6 Z" fill="#fdfdf3" stroke="#7c7c76" stroke-width="1.4" stroke-linejoin="miter"/><path d="M613 131.8 C614.5 127 617.5 124 622.1 123.2 C620.3 125.5 620 129 620.8 131.8 Z" fill="#ffffff"/><g opacity="0.99"><text x="610.9" y="143.9" font-family="Liberation Serif" font-weight="bold" font-size="9.4" fill="#9d9d96" letter-spacing="0.25">01010</text><text x="610.9" y="152.7" font-family="Liberation Serif" font-weight="bold" font-size="9.4" fill="#9d9d96" letter-spacing="0.25">01101</text><text x="610.9" y="161.5" font-family="Liberation Serif" font-weight="bold" font-size="9.4" fill="#9d9d96" letter-spacing="0.25">01110</text></g><path d="M681 121 L709.5 121 L718 130.5 L718 167 L681 167 Z" fill="#fbfbef" stroke="#7c7c76" stroke-width="2.2" stroke-linejoin="miter"/><path d="M682.1 122.1 L709.5 122.1 L716.9 131.8 L682.1 131.8 Z" fill="url(#docband)"/><path d="M709.5 121.5 L717.5 129.6 L709.5 129.6 Z" fill="#fdfdf3" stroke="#7c7c76" stroke-width="1.4" stroke-linejoin="miter"/><path d="M689 131.8 C690.5 127 693.5 124 698.1 123.2 C696.3 125.5 696 129 696.8 131.8 Z" fill="#ffffff"/><g opacity="0.99"><text x="686.9" y="143.9" font-family="Liberation Serif" font-weight="bold" font-size="9.4" fill="#9d9d96" letter-spacing="0.25">01010</text><text x="686.9" y="152.7" font-family="Liberation Serif" font-weight="bold" font-size="9.4" fill="#9d9d96" letter-spacing="0.25">01101</text><text x="686.9" y="161.5" font-family="Liberation Serif" font-weight="bold" font-size="9.4" fill="#9d9d96" letter-spacing="0.25">01110</text></g><path d="M611 131 L636.5 157 M636.5 131 L611 157" stroke="#2b2d2e" stroke-width="4.8" stroke-linecap="round"/><path d="M702 132.2 A11.3 11.3 0 1 0 711.8 145.5" fill="none" stroke="#234e95" stroke-width="5"/><path d="M698 126.8 L707 132 L698.5 137.5 Z" fill="#234e95" stroke="#234e95" stroke-width="1.5" stroke-linejoin="round"/><circle cx="793" cy="135.2" r="12" fill="#eeeeec" stroke="#2e3436" stroke-width="2.6"/><path d="M785.5 132 Q787.5 127.5 793.5 126.8" fill="none" stroke="#2e3436" stroke-width="1.6" stroke-linecap="round"/><path d="M801.8 152 L808.6 162.3" stroke="#2e3436" stroke-width="7.5" stroke-linecap="round"/><path d="M854.8 143.8 L868.5 130.6 L868.5 138.2 L890.2 138.2 L890.2 149.6 L868.5 149.6 L868.5 157 Z" fill="none" stroke="#888a85" stroke-width="8.5" stroke-linejoin="round"/><path d="M854.8 143.8 L868.5 130.6 L868.5 138.2 L890.2 138.2 L890.2 149.6 L868.5 149.6 L868.5 157 Z" fill="none" stroke="#ffffff" stroke-width="5" stroke-linejoin="round"/><path d="M854.8 143.8 L868.5 130.6 L868.5 138.2 L890.2 138.2 L890.2 149.6 L868.5 149.6 L868.5 157 Z" fill="url(#gGreen)"/><path d="M 965.20 143.80 L 951.50 130.60 L 951.50 138.20 L 929.80 138.20 L 929.80 149.60 L 951.50 149.60 L 951.50 157.00 Z" fill="none" stroke="#888a85" stroke-width="8.5" stroke-linejoin="round"/><path d="M 965.20 143.80 L 951.50 130.60 L 951.50 138.20 L 929.80 138.20 L 929.80 149.60 L 951.50 149.60 L 951.50 157.00 Z" fill="none" stroke="#ffffff" stroke-width="5" stroke-linejoin="round"/><path d="M 965.20 143.80 L 951.50 130.60 L 951.50 138.20 L 929.80 138.20 L 929.80 149.60 L 951.50 149.60 L 951.50 157.00 Z" fill="url(#gGreen)"/><rect x="1004" y="124" width="44" height="42" fill="#eeeeec"/><rect x="1004" y="123" width="44" height="2" fill="#2e3436"/><rect x="1004" y="129" width="44" height="2" fill="#2e3436"/><rect x="1004" y="133.5" width="44" height="4" fill="#fce94f"/><rect x="1004" y="141" width="44" height="2" fill="#2e3436"/><rect x="1004" y="147" width="44" height="2" fill="#2e3436"/><rect x="1004" y="153" width="44" height="2" fill="#2e3436"/><rect x="1004" y="159" width="44" height="2" fill="#2e3436"/><rect x="1004" y="165" width="44" height="2" fill="#2e3436"/><path d="M1033.5 137.2 L1020.5 124.6 L1020.5 132 L1004.2 132 L1004.2 143.2 L1020.5 143.2 L1020.5 150 Z" fill="none" stroke="#888a85" stroke-width="8.5" stroke-linejoin="round"/><path d="M1033.5 137.2 L1020.5 124.6 L1020.5 132 L1004.2 132 L1004.2 143.2 L1020.5 143.2 L1020.5 150 Z" fill="none" stroke="#ffffff" stroke-width="5" stroke-linejoin="round"/><path d="M1033.5 137.2 L1020.5 124.6 L1020.5 132 L1004.2 132 L1004.2 143.2 L1020.5 143.2 L1020.5 150 Z" fill="url(#gGreen)"/><path d="M1099.7 132.8 L1112.6 148.6 L1105.8 148.6 L1105.8 161.6 L1094.3 161.6 L1094.3 148.6 L1087 148.6 Z" fill="none" stroke="#888a85" stroke-width="8.5" stroke-linejoin="round"/><path d="M1099.7 132.8 L1112.6 148.6 L1105.8 148.6 L1105.8 161.6 L1094.3 161.6 L1094.3 148.6 L1087 148.6 Z" fill="none" stroke="#ffffff" stroke-width="5" stroke-linejoin="round"/><path d="M1099.7 132.8 L1112.6 148.6 L1105.8 148.6 L1105.8 161.6 L1094.3 161.6 L1094.3 148.6 L1087 148.6 Z" fill="url(#gGreenV)"/><rect x="1079" y="122.8" width="42" height="4.6" rx="2.3" fill="#ffffff" stroke="#888a85" stroke-width="1.8"/><path d="M 1175.70 155.00 L 1188.60 139.20 L 1181.80 139.20 L 1181.80 126.20 L 1170.30 126.20 L 1170.30 139.20 L 1163.00 139.20 Z" fill="none" stroke="#888a85" stroke-width="8.5" stroke-linejoin="round"/><path d="M 1175.70 155.00 L 1188.60 139.20 L 1181.80 139.20 L 1181.80 126.20 L 1170.30 126.20 L 1170.30 139.20 L 1163.00 139.20 Z" fill="none" stroke="#ffffff" stroke-width="5" stroke-linejoin="round"/><path d="M 1175.70 155.00 L 1188.60 139.20 L 1181.80 139.20 L 1181.80 126.20 L 1170.30 126.20 L 1170.30 139.20 L 1163.00 139.20 Z" fill="url(#gGreenV)"/><rect x="1155" y="160.4" width="42" height="4.6" rx="2.3" fill="#ffffff" stroke="#888a85" stroke-width="1.8"/><rect x="1218" y="111" width="68" height="67" fill="url(#pressed)"/><rect x="1218" y="111" width="4.5" height="67" fill="url(#pressedE)"/><rect x="1281.5" y="111" width="4.5" height="67" fill="url(#pressedE)"/><rect x="1219" y="111" width="2" height="67" fill="url(#pressedE)"/><rect x="1283" y="111" width="2" height="67" fill="url(#pressedE)"/><rect x="1218" y="176.5" width="68" height="1.5" fill="#adadad"/><rect x="1230" y="122" width="44" height="44" fill="#eeeeec"/><rect x="1230" y="122" width="44" height="2" fill="#1f2324"/><rect x="1230" y="164" width="44" height="2" fill="#1f2324"/><rect x="1230" y="128" width="44" height="2" fill="#babdb6"/><rect x="1230" y="134" width="44" height="2" fill="#babdb6"/><rect x="1230" y="140" width="44" height="2" fill="#babdb6"/><rect x="1230" y="146" width="44" height="2" fill="#babdb6"/><rect x="1230" y="152" width="44" height="2" fill="#babdb6"/><rect x="1230" y="158" width="44" height="2" fill="#babdb6"/><path d="M1251 156.8 Q1249.5 154 1254 153.9 L1268 153.9 Q1272.5 154 1271 156.8 L1263 165 Q1261 166.6 1259 165 Z" fill="#3465a4"/><rect x="1314" y="111" width="68" height="67" fill="url(#pressed)"/><rect x="1314" y="111" width="4.5" height="67" fill="url(#pressedE)"/><rect x="1377.5" y="111" width="4.5" height="67" fill="url(#pressedE)"/><rect x="1315" y="111" width="2" height="67" fill="url(#pressedE)"/><rect x="1379" y="111" width="2" height="67" fill="url(#pressedE)"/><rect x="1314" y="176.5" width="68" height="1.5" fill="#adadad"/><rect x="1326" y="122" width="44" height="44" fill="#eeeeec"/><rect x="1326" y="122" width="44" height="2" fill="#1f2324"/><rect x="1326" y="128" width="44" height="2" fill="#ef2929"/><rect x="1326" y="134" width="44" height="2" fill="#3465a4"/><rect x="1326" y="140" width="44" height="2" fill="#73d216"/><rect x="1326" y="146" width="44" height="2" fill="#3465a4"/><rect x="1326" y="152" width="44" height="2" fill="#75507b"/><rect x="1326" y="158" width="44" height="2" fill="#c4a000"/><rect x="1326" y="164" width="44" height="2" fill="#1f2324"/><circle cx="1439" cy="139" r="13.9" fill="#eeeeec" stroke="#2e3436" stroke-width="2.2"/><path d="M1450.3 150.5 L1460.8 161" stroke="#2e3436" stroke-width="7.6" stroke-linecap="round"/><path d="M1432.3 139 L1445.7 139 M1439 132.3 L1439 145.8" stroke="#2e3436" stroke-width="2"/><circle cx="1515" cy="139" r="13.9" fill="#eeeeec" stroke="#2e3436" stroke-width="2.2"/><path d="M1526.3 150.5 L1536.8 161" stroke="#2e3436" stroke-width="7.6" stroke-linecap="round"/><path d="M1508.1 139 L1521.9 139" stroke="#2e3436" stroke-width="2"/><circle cx="1591" cy="139" r="13.9" fill="#eeeeec" stroke="#2e3436" stroke-width="2.2"/><path d="M1602.3 150.5 L1612.8 161" stroke="#2e3436" stroke-width="7.6" stroke-linecap="round"/><path d="M1584.1 136.9 L1597.9 136.9 M1584.1 141.3 L1597.9 141.3" stroke="#2e3436" stroke-width="2"/><rect x="1650" y="122" width="44" height="44" fill="#eeeeec"/><rect x="1650" y="128" width="44" height="2" fill="#babdb6"/><rect x="1650" y="134" width="44" height="2" fill="#babdb6"/><rect x="1650" y="140" width="44" height="2" fill="#babdb6"/><rect x="1650" y="146" width="44" height="2" fill="#babdb6"/><rect x="1650" y="152" width="44" height="2" fill="#babdb6"/><rect x="1650" y="158" width="44" height="2" fill="#babdb6"/><rect x="1650" y="122" width="44" height="2" fill="#1f2324"/><rect x="1650" y="164" width="44" height="2" fill="#1f2324"/><rect x="1660" y="123" width="2" height="42" fill="#888a85"/><rect x="1676" y="123" width="2" height="42" fill="#888a85"/><path d="M1654 130 Q1654.5 129 1656 130 L1661 135.5 L1656 142 Q1654.5 143 1654 142 Z" fill="#3465a4"/><path d="M1684 130 Q1683.5 129 1682 130 L1677 135.5 L1682 142 Q1683.5 143 1684 142 Z" fill="#3465a4"/>
<defs><linearGradient id="tg" x1="0" y1="0" x2="1" y2="1"><stop offset="0" stop-color="#7ab2ec"/><stop offset="0.75" stop-color="#7b91c9"/><stop offset="1" stop-color="#8a9ccf"/></linearGradient><clipPath id="tcl"><path d="M1046.6 100.8 C1050 86 1059 74.5 1073.5 71.5 Q1077.5 70.8 1077 72.5 C1072.5 80 1071.5 92 1076.7 100.8 Z"/></clipPath></defs>
<path d="M1046.6 100.8 C1050 86 1059 74.5 1073.5 71.5 Q1077.5 70.8 1077 72.5 C1072.5 80 1071.5 92 1076.7 100.8 Z" fill="url(#tg)"/>
<g clip-path="url(#tcl)"><path d="M1040 96.5 Q1050 95 1058 96 Q1066 97 1080 96 L1080 102 L1040 102 Z" fill="#b3c6ea" opacity="0.8"/></g>
<path d="M124.5 193.5 Q124.5 192 126 192 L138.5 192 Q140 192 140 193.5 L140 218.5 Q140 220 138.5 219.5 L132.3 213.8 L126 219.5 Q124.5 220 124.5 218.5 Z" fill="url(#bmark)"/>
<rect x="2078" y="192" width="48" height="28" rx="5" fill="url(#applyBtn)"/>
<path d="M2087 202.8 L2106.5 202.8 L2106.5 198.6 L2117.8 206 L2106.5 213.4 L2106.5 209.2 L2087 209.2 Z" fill="#fff" stroke="#fff" stroke-width="1.6" stroke-linejoin="round"/>
<path d="M2141.3 202 L2155 202 L2148.2 210 Z" fill="#505050"/>
<rect x="2337.8" y="183.8" width="2.4" height="2.4" fill="#5c5c5c"/><rect x="2337.8" y="189.8" width="2.4" height="2.4" fill="#5c5c5c"/><rect x="2337.8" y="195.8" width="2.4" height="2.4" fill="#5c5c5c"/><rect x="2337.8" y="201.8" width="2.4" height="2.4" fill="#5c5c5c"/><rect x="2337.8" y="207.8" width="2.4" height="2.4" fill="#5c5c5c"/><rect x="2337.8" y="213.8" width="2.4" height="2.4" fill="#5c5c5c"/><rect x="2337.8" y="219.8" width="2.4" height="2.4" fill="#5c5c5c"/><rect x="2337.8" y="225.8" width="2.4" height="2.4" fill="#5c5c5c"/>
<path d="M2378 198 L2378 214 M2370 206 L2386 206" stroke="#404040" stroke-width="3.8"/>
<g fill="none" stroke="#8c8c8c" stroke-width="2.6"><circle cx="461.6" cy="200.6" r="3.2"/><circle cx="473.2" cy="200.6" r="3.2"/><circle cx="461.6" cy="212.2" r="3.2"/><circle cx="473.2" cy="212.2" r="3.2"/><path d="M461.6 203.8 L473.2 203.8 M461.6 209 L473.2 209 M464.8 200.6 L464.8 212.2 M470 200.6 L470 212.2"/></g>
</svg>
<div class="t s" style="left:2077px;top:130.95px;font-size:21.6px;color:#000;letter-spacing:-0.55px">Expression…</div>
<svg class="ov" width="2524" height="1448" viewBox="0 0 2524 1448">
<path d="M183 1252.5 L198.5 1252.5 L204.5 1258 L204.5 1279.5 L183 1279.5 Z" fill="#f3f3e8" stroke="#c9c9c0" stroke-width="0.8"/>
<path d="M183.4 1252.9 L198 1252.9 L198 1259 L183.4 1259 Z" fill="#3d9fdc"/>
<path d="M186.5 1259 C187 1256.5 188.5 1254.5 191 1254 C190 1255.5 189.8 1257.5 190.5 1259 Z" fill="#fff"/>
<text x="185.5" y="1265.5" font-family="Liberation Mono" font-size="5.6" fill="#a8a8a0" letter-spacing="-0.6">00110</text>
<text x="185.5" y="1271.1" font-family="Liberation Mono" font-size="5.6" fill="#a8a8a0" letter-spacing="-0.6">00110</text>
<text x="185.5" y="1276.7" font-family="Liberation Mono" font-size="5.6" fill="#a8a8a0" letter-spacing="-0.6">00110</text>
<path d="M206.2 1252.2 L210.4 1256.4 L193.2 1273.2 L189 1269 Z" fill="#555753"/>
<path d="M204.5 1253.9 L208.7 1258.1" stroke="#2e3436" stroke-width="1"/>
<path d="M189 1269 L193.2 1273.2 L187.6 1275.2 Z" fill="#111"/>
</svg>
</div></body></html>
